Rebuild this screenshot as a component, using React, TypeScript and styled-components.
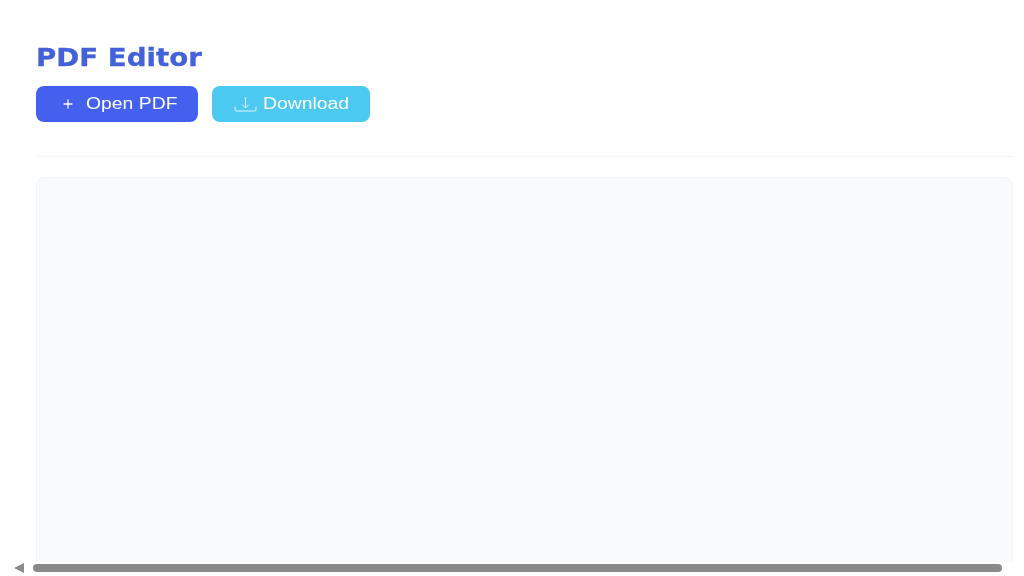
import React from "react";
import styled, { createGlobalStyle } from "styled-components";

const Global = createGlobalStyle`
  html, body { margin: 0; padding: 0; background: #fff; overflow: hidden; }
  #root { width: 1024px; height: 576px; }
`;

const Page = styled.div`
  position: relative;
  box-sizing: border-box;
  width: 1024px;
  height: 576px;
  padding: 43px 11px 0 36px;
  display: flex;
  flex-direction: column;
  overflow: hidden;
  background: #fff;
  font-family: "Liberation Sans", Arial, sans-serif;
`;

const Title = styled.h1`
  margin: 0 0 13px;
  font-family: "DejaVu Sans", sans-serif;
  font-size: 24px;
  line-height: 30px;
  font-weight: 700;
  color: #4361d8;
  -webkit-text-stroke: 0.3px #4361d8;
  transform: scaleX(1.153);
  transform-origin: left center;
  will-change: transform;
`;

const Toolbar = styled.div`
  display: flex;
  gap: 14px;
  padding-bottom: 34px;
  border-bottom: 1px solid #f4f5f7;
  margin-bottom: 20px;
`;

const Button = styled.button<{ $bg: string; $w: number; $gap: number; $pl: number }>`
  box-sizing: border-box;
  width: ${(p) => p.$w}px;
  height: 36px;
  padding: 0 0 0 ${(p) => p.$pl}px;
  display: flex;
  align-items: center;
  gap: ${(p) => p.$gap}px;
  border: none;
  border-radius: 8px;
  background: ${(p) => p.$bg};
  color: #fff;
  font-family: "Liberation Sans", Arial, sans-serif;
  font-size: 16px;
`;

const Label = styled.span`
  display: block;
  transform: scaleX(1.21);
  transform-origin: left center;
  will-change: transform;
`;

const Icon = styled.svg`
  flex: none;
  display: block;
`;

const Canvas = styled.div`
  flex: 1;
  margin-bottom: -10px;
  background: #f8fafc;
  border: 1px solid #f1f3f6;
  border-radius: 8px;
`;

const Scrollbar = styled.div`
  position: absolute;
  left: 0;
  right: 0;
  bottom: 0;
  box-sizing: border-box;
  height: 14px;
  display: flex;
  align-items: center;
  padding: 0 0 2px 14px;
  background: #fff;
`;

const Arrow = styled.div`
  width: 0;
  height: 0;
  border-style: solid;
  border-width: 5px 10px 5px 0;
  border-color: transparent #8a8a8a transparent transparent;
  margin-right: 9px;
`;

const Thumb = styled.div`
  width: 969px;
  height: 8px;
  border-radius: 4px;
  background: #8a8a8a;
`;

export default function App() {
  return (
    <Page>
      <Global />
      <Title>PDF Editor</Title>
      <Toolbar>
        <Button $bg="#4361ee" $w={162} $gap={12} $pl={26}>
          <Icon width="12" height="12" viewBox="0 0 12 12" fill="none" stroke="#fff" strokeWidth="1.3">
            <path d="M6 1.5v9M1.5 6h9" />
          </Icon>
          <Label>Open PDF</Label>
        </Button>
        <Button $bg="#4cc9f0" $w={158} $gap={5} $pl={21}>
          <Icon width="25" height="20" viewBox="0 0 25 20" fill="none" stroke="#fff" strokeWidth="1" strokeOpacity="0.85">
            <path d="M12.5 3v11M9 10.5l3.5 3.5 3.5-3.5M2 12.5v3a1.5 1.5 0 0 0 1.5 1.5h18a1.5 1.5 0 0 0 1.5-1.5v-3" />
          </Icon>
          <Label>Download</Label>
        </Button>
      </Toolbar>
      <Canvas />
      <Scrollbar>
        <Arrow />
        <Thumb />
      </Scrollbar>
    </Page>
  );
}
